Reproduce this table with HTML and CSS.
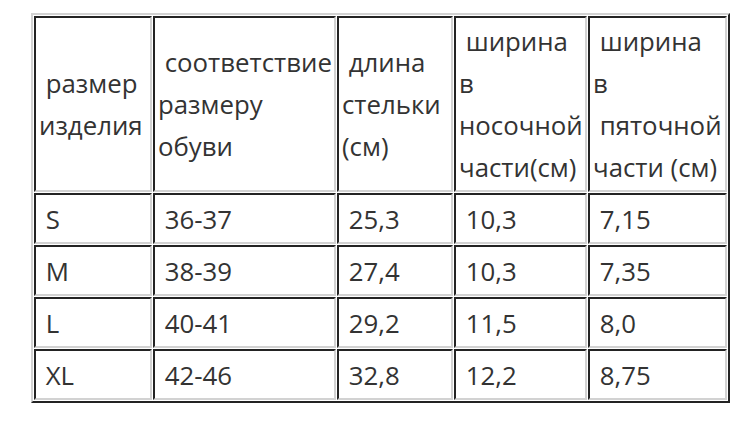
FILE: index.html
```html
<!DOCTYPE html>
<html lang="ru">
<head>
<meta charset="utf-8">
<title>Таблица размеров</title>
<link rel="stylesheet" href="styles.css">
</head>
<body>
<table class="sizes">
  <colgroup>
    <col class="w1">
    <col class="w2">
    <col class="w3">
    <col class="w4">
    <col class="w5">
  </colgroup>
  <tr class="head">
    <td>&nbsp;размер<br>изделия</td>
    <td>&nbsp;соответствие<br>размеру<br>обуви</td>
    <td>&nbsp;длина<br>стельки<br>(см)</td>
    <td>&nbsp;ширина<br>в<br>носочной<br>части(см)</td>
    <td>&nbsp;ширина<br>в<br>&nbsp;пяточной<br>части (см)</td>
  </tr>
  <tr class="row">
    <td>&nbsp;S</td><td>&nbsp;36-37</td><td>&nbsp;25,3</td><td>&nbsp;10,3</td><td>&nbsp;7,15</td>
  </tr>
  <tr class="row">
    <td>&nbsp;M</td><td>&nbsp;38-39</td><td>&nbsp;27,4</td><td>&nbsp;10,3</td><td>&nbsp;7,35</td>
  </tr>
  <tr class="row">
    <td>&nbsp;L</td><td>&nbsp;40-41</td><td>&nbsp;29,2</td><td>&nbsp;11,5</td><td>&nbsp;8,0</td>
  </tr>
  <tr class="row">
    <td>&nbsp;XL</td><td>&nbsp;42-46</td><td>&nbsp;32,8</td><td>&nbsp;12,2</td><td>&nbsp;8,75</td>
  </tr>
</table>
</body>
</html>
```
FILE: styles.css
```css
html, body {
  margin: 0;
  background: #ffffff;
}
body {
  padding: 13px 0 0 31px;
  font-family: "Open Sans", "Noto Sans", sans-serif;
  font-size: 25.8px;
  color: #333333;
}
.sizes {
  table-layout: fixed;
  width: 699px;
  border-collapse: separate;
  border-spacing: 1px;
  border-style: solid;
  border-width: 2px;
  border-color: #d2d2d2 #232323 #232323 #d2d2d2;
}
.w1 { width: 118px; }
.w2 { width: 183px; }
.w3 { width: 116px; }
.w4 { width: 133px; }
.w5 { width: 139px; }
.sizes td {
  box-sizing: border-box;
  padding: 2px 3px;
  border-style: solid;
  border-width: 2px;
  border-color: #232323 #d2d2d2 #d2d2d2 #232323;
  line-height: 42px;
  vertical-align: middle;
  text-align: left;
  white-space: nowrap;
  overflow: hidden;
}
.head td {
  height: 176px;
}
.row td {
  height: 51px;
}
```
